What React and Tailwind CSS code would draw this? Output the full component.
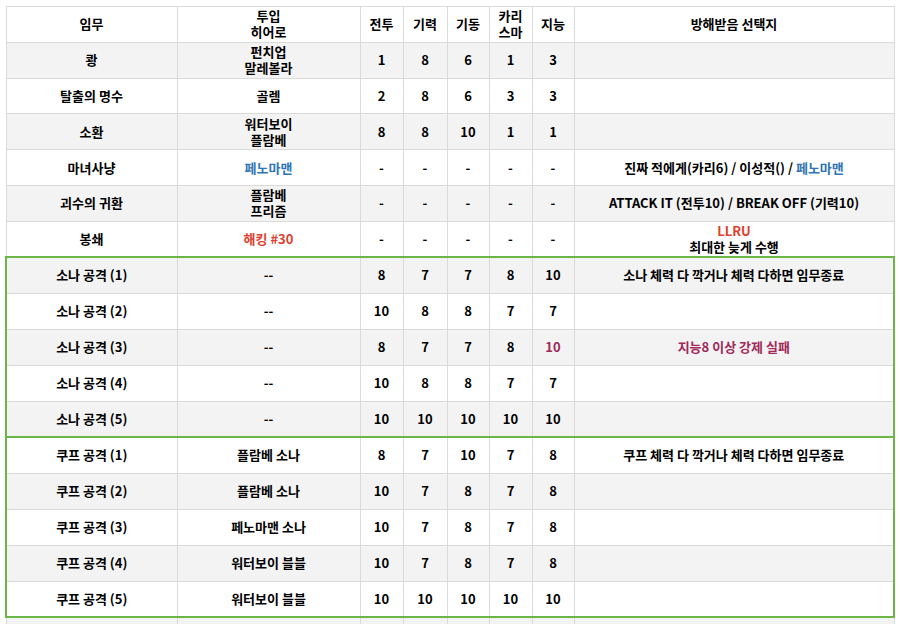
const BLUE = "text-[#2f74b5]";

const topRows = [
  { m: "쾅", h: ["펀치업", "말레볼라"], s: ["1", "8", "6", "1", "3"], d: null },
  { m: "탈출의 명수", h: ["골렘"], s: ["2", "8", "6", "3", "3"], d: null },
  { m: "소환", h: ["워터보이", "플람베"], s: ["8", "8", "10", "1", "1"], d: null },
  {
    m: "마녀사냥",
    h: [<span className={BLUE}>페노마맨</span>],
    s: ["-", "-", "-", "-", "-"],
    d: (
      <>
        진짜 적에게(카리6) / 이성적() / <span className={BLUE}>페노마맨</span>
      </>
    ),
  },
  {
    m: "괴수의 귀환",
    h: ["플람베", "프리즘"],
    s: ["-", "-", "-", "-", "-"],
    d: "ATTACK IT (전투10) / BREAK OFF (기력10)",
  },
  {
    m: "봉쇄",
    h: [<span className="text-[#e0402e]">해킹 #30</span>],
    s: ["-", "-", "-", "-", "-"],
    d: (
      <>
        <div className="text-[#e0402e]">LLRU</div>
        <div>최대한 늦게 수행</div>
      </>
    ),
  },
];

const sonaRows = [
  { m: "소나 공격 (1)", h: ["--"], s: ["8", "7", "7", "8", "10"], d: "소나 체력 다 깍거나 체력 다하면 임무종료" },
  { m: "소나 공격 (2)", h: ["--"], s: ["10", "8", "8", "7", "7"], d: null },
  {
    m: "소나 공격 (3)",
    h: ["--"],
    s: ["8", "7", "7", "8", <span className="font-semibold text-[#a0285a]">10</span>],
    d: <span className="text-[#a0285a]">지능8 이상 강제 실패</span>,
  },
  { m: "소나 공격 (4)", h: ["--"], s: ["10", "8", "8", "7", "7"], d: null },
  { m: "소나 공격 (5)", h: ["--"], s: ["10", "10", "10", "10", "10"], d: null },
];

const coopRows = [
  { m: "쿠프 공격 (1)", h: ["플람베 소나"], s: ["8", "7", "10", "7", "8"], d: "쿠프 체력 다 깍거나 체력 다하면 임무종료" },
  { m: "쿠프 공격 (2)", h: ["플람베 소나"], s: ["10", "7", "8", "7", "8"], d: null },
  { m: "쿠프 공격 (3)", h: ["페노마맨 소나"], s: ["10", "7", "8", "7", "8"], d: null },
  { m: "쿠프 공격 (4)", h: ["워터보이 블블"], s: ["10", "7", "8", "7", "8"], d: null },
  { m: "쿠프 공격 (5)", h: ["워터보이 블블"], s: ["10", "10", "10", "10", "10"], d: null },
];

const base = "border border-[#dadada] px-1 py-0 text-center align-middle leading-[16px]";
const cell = base + " h-[35.8px]";
const tallCell = base + " h-[36px]";

function Row({ row, gray, tall }) {
  const c = tall ? tallCell : cell;
  return (
    <tr className={gray ? "bg-[#f3f3f3]" : "bg-white"}>
      <td className={c}>{row.m}</td>
      <td className={c}>
        {row.h.map((line, i) => (
          <div key={i}>{line}</div>
        ))}
      </td>
      {row.s.map((v, i) => (
        <td key={i} className={c}>
          {v}
        </td>
      ))}
      <td className={c}>{row.d}</td>
    </tr>
  );
}

export default function App() {
  return (
    <div className="bg-white w-[900px] h-[624px] overflow-hidden pt-[6px] pl-[5px]">
      <table
        className="border-collapse table-fixed w-[888px] text-[13px] font-bold text-black"
        style={{ fontFamily: '"Noto Sans CJK KR", "Noto Sans", sans-serif' }}
      >
        <colgroup>
          <col className="w-[171px]" />
          <col className="w-[183px]" />
          <col className="w-[43px]" />
          <col className="w-[44px]" />
          <col className="w-[42px]" />
          <col className="w-[43px]" />
          <col className="w-[42px]" />
          <col className="w-[320px]" />
        </colgroup>
        <thead>
          <tr className="bg-white">
            <td className={cell}>임무</td>
            <td className={cell}>
              <div>투입</div>
              <div>히어로</div>
            </td>
            <td className={cell}>전투</td>
            <td className={cell}>기력</td>
            <td className={cell}>기동</td>
            <td className={cell}>
              <div>카리</div>
              <div>스마</div>
            </td>
            <td className={cell}>지능</td>
            <td className={cell}>방해받음 선택지</td>
          </tr>
        </thead>
        <tbody>
          {topRows.map((r, i) => (
            <Row key={i} row={r} gray={i % 2 === 0} />
          ))}
        </tbody>
        <tbody className="border-2 border-[#6cb547]">
          {sonaRows.map((r, i) => (
            <Row key={i} row={r} gray={i % 2 === 0} tall />
          ))}
        </tbody>
        <tbody className="border-2 border-[#6cb547]">
          {coopRows.map((r, i) => (
            <Row key={i} row={r} gray={i % 2 === 1} tall />
          ))}
        </tbody>
        <tbody>
          <Row row={{ m: "", h: [""], s: ["", "", "", "", ""], d: null }} gray tall />
        </tbody>
      </table>
    </div>
  );
}
